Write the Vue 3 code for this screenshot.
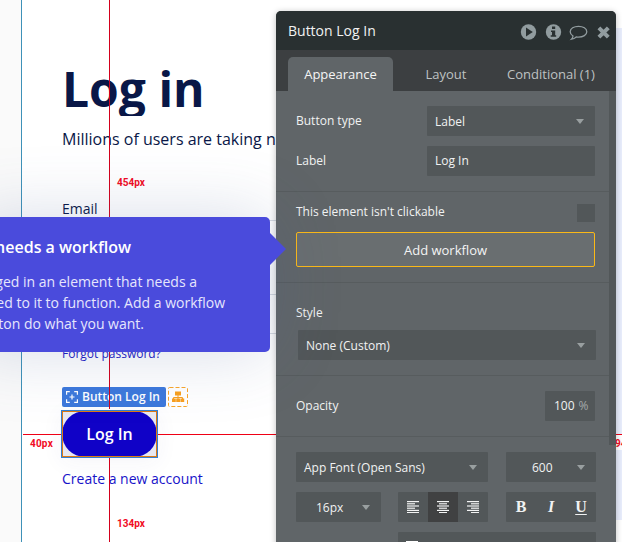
<script setup>
const tabs = [
  { name: 'Appearance', cls: 'active' },
  { name: 'Layout', cls: 'layout' },
  { name: 'Conditional (1)', cls: 'cond' },
]
const aligns = ['left', 'center', 'right']
const lineX = { left: [0, 0, 0, 0, 0, 0], center: [0, 2, 0, 2, 0, 2], right: [0, 4, 0, 4, 0, 4] }
const lineW = { left: [12, 8, 12, 8, 12, 12], center: [12, 8, 12, 8, 12, 8], right: [12, 8, 12, 8, 12, 8] }
</script>

<template>
  <div class="editor">
    <div class="gutter"></div>
    <main class="page">
      <h1><span>Log in</span></h1>
      <p class="sub"><span>Millions of users are taking n</span></p>
      <p class="email"><span>Email</span></p>
      <div class="inputs"><i></i><i></i><i></i></div>
      <p class="forgot"><span>Forgot password?</span></p>
      <div class="tagrow">
        <div class="tag">
          <svg width="12" height="12" viewBox="0 0 12 12" fill="none" stroke="#fff" stroke-width="1.2">
            <path d="M.6 3.8V.6h3.2M8.2.6h3.2v3.2M11.4 8.2v3.2H8.2M3.8 11.4H.6V8.2M6 3.5v5M3.5 6h5" />
          </svg>
          <span>Button Log In</span>
        </div>
        <svg class="wf" width="20" height="20" viewBox="0 0 20 20">
          <rect x=".5" y=".5" width="19" height="19" rx="1" fill="none" stroke="#f9a62b" stroke-dasharray="4 2" />
          <path d="M7 4.500h6v4H7zM4 11.500h3.800v3.500H4zM8.200 11.500H12v3.500H8.200zM12.400 11.500h3.800v3.500h-3.800z" fill="#f9a01f" />
          <path d="M10 8v4M5.500 12.500v-2h9v2" fill="none" stroke="#f9a01f" />
        </svg>
      </div>
      <div class="selected"><div class="pill"><span>Log In</span></div></div>
      <p class="create"><span>Create a new account</span></p>
    </main>
    <div class="strip"></div>

    <div class="guide v top"></div>
    <div class="guide v bottom"></div>
    <div class="guide h left"></div>
    <div class="guide h mid"></div>
    <div class="guide h right"></div>
    <b class="measure m1">454px</b>
    <b class="measure m2">40px</b>
    <b class="measure m3">134px</b>
    <b class="measure m4">94</b>

    <section class="panel">
      <header>
        <span class="title">Button Log In</span>
        <svg width="90" height="20" viewBox="0 0 90 20">
          <circle cx="8.500" cy="10" r="7.700" fill="#919c9f" />
          <path d="M6 5.600v8.800l6.800-4.400z" fill="#293031" />
          <circle cx="33.500" cy="10" r="7.700" fill="#919c9f" />
          <path d="M32 4.500h3.200v2.600H32zM31 8.500h4.200v4.700h1v1.600h-5.500v-1.600H32v-3.100h-1z" fill="#293031" />
          <path d="M58.500 4.300c4.600 0 8.300 2.200 8.300 5.400s-3.700 5.400-8.300 5.400c-.8 0-1.600-.1-2.300-.2-1.400 1.300-3 2-4.700 2.300.9-.9 1.400-1.900 1.500-3.200C51 12.800 50.200 11.400 50.200 9.700c0-3.200 3.700-5.400 8.300-5.400z" fill="none" stroke="#919c9f" stroke-width="1.300" />
          <path d="M78.900 5.800l9.400 9.400M88.300 5.800l-9.400 9.400" stroke="#919c9f" stroke-width="4" />
        </svg>
      </header>
      <nav>
        <div v-for="t in tabs" :key="t.name" :class="t.cls"><span>{{ t.name }}</span></div>
      </nav>
      <div class="body">
        <div class="form">
          <div class="group g1">
            <div class="row"><span class="lb">Button type</span><div class="field f168"><span>Label</span><i class="caret"></i></div></div>
            <div class="row"><span class="lb">Label</span><div class="field f168 input"><span>Log In</span></div></div>
          </div>
          <div class="group g2">
            <div class="row short"><span class="lb">This element isn't clickable</span><div class="check"></div></div>
            <button><span>Add workflow</span></button>
          </div>
          <div class="group g3">
            <span class="style">Style</span>
            <div class="field full"><span>None (Custom)</span><i class="caret"></i></div>
          </div>
          <div class="group g4">
            <div class="row"><span class="lb">Opacity</span><div class="field pct"><span>100</span><em>%</em></div></div>
          </div>
          <div class="group g5">
            <div class="grid">
              <div class="field font"><span>App Font (Open Sans)</span><i class="caret"></i></div>
              <div class="field weight"><span>600</span><i class="caret"></i></div>
            </div>
            <div class="grid">
              <div class="field size"><span>16px</span><i class="caret"></i></div>
              <div class="seg">
                <div v-for="a in aligns" :key="a" :class="{ on: a === 'center' }">
                  <svg width="12" height="12" viewBox="0 0 12 12" fill="#f2f3f3">
                    <rect v-for="n in 6" :key="n" :x="lineX[a][n - 1]" :y="(n - 1) * 2.2" :width="lineW[a][n - 1]" height="1.2" />
                  </svg>
                </div>
              </div>
              <div class="seg serif"><div><b>B</b></div><div><b><i>I</i></b></div><div><b class="u">U</b></div></div>
            </div>
            <div class="grid last"><div class="field color"><i></i></div></div>
          </div>
        </div>
        <div class="track"><div class="thumb"></div></div>
      </div>
    </section>

    <aside class="tip">
      <h2><span>needs a workflow</span></h2>
      <p class="l1"><span>ged in an element that needs a</span></p>
      <p class="l2"><span>ed to it to function. Add a workflow</span></p>
      <p class="l3"><span>ton do what you want.</span></p>
      <svg class="arrow" width="16" height="32" viewBox="0 0 16 32"><path d="M0 0l16 16L0 32z" fill="#4a4bdc" /></svg>
    </aside>
  </div>
</template>

<style>
body { margin: 0; overflow: hidden; }
</style>

<style scoped>
* { box-sizing: border-box; }
.editor { position: relative; display: flex; width: 622px; height: 542px; overflow: hidden; background: #fff; font-family: "Open Sans", "Noto Sans", sans-serif; white-space: nowrap; }
h1, h2, p { margin: 0; }
.gutter { width: 22px; background: #fafafa; border-right: 1px solid #3e91b8; }
.page { width: 594px; padding: 64px 0 0 40px; color: #091747; }
h1 { height: 52px; overflow: hidden; font-size: 48px; line-height: 50px; font-weight: 700; }
.sub { margin-top: 11px; height: 24px; font-size: 16px; line-height: 24px; }
.email { margin-top: 47px; height: 22px; font-size: 14px; line-height: 22px; }
.inputs { display: flex; flex-direction: column; height: 124px; margin-left: -1px; }
.inputs i { height: 1px; background: #d7dbe2; }
.inputs i:nth-child(2) { margin-top: 73px; }
.inputs i:nth-child(3) { margin-top: 38px; }
.forgot { height: 20px; font-size: 12px; line-height: 20px; color: #2119c4; }
.tagrow { display: flex; gap: 2px; margin-top: 23px; height: 20px; }
.tag { display: flex; align-items: center; gap: 4px; width: 104px; padding-left: 4px; border-radius: 2px; background: #3d79dc; color: #fff; font-size: 12px; line-height: 20px; font-weight: 600; }
.tag span { height: 20px; }
.selected { display: flex; width: 97px; height: 48px; margin: 3px 0 0 -1px; border: 1px solid #347fd2; background: #e8e8f0; box-shadow: 0 4px 22px rgba(50, 60, 130, .05); position: relative; }
.selected::after { content: ""; position: absolute; inset: 0; border: 1px solid #dd7a13; }
.pill { display: flex; flex: 1; align-items: center; justify-content: center; border-radius: 23px; background: #1002c7; color: #fff; font-size: 16px; font-weight: 600; }
.create { margin-top: 9px; font-size: 14px; line-height: 24px; color: #1713c9; }
.strip { width: 6px; height: 492px; margin-top: 28px; background: linear-gradient(#e8edfc 407px, #fff 407px, #fff 422px, #e8edfc 422px); }
.guide { position: absolute; background: #ef0015; }
.v { left: 109px; width: 1px; background: #d3001c; }
.top { top: 0; height: 409px; }
.bottom { top: 458px; height: 84px; }
.h { top: 434px; height: 1px; }
.left { left: 23px; width: 38px; }
.mid { left: 158px; width: 118px; }
.right { left: 616px; width: 6px; }
.measure { position: absolute; color: #f10a24; font: 700 10px/12px Roboto, sans-serif; }
.m1 { left: 117px; top: 177px; }
.m2 { left: 30px; top: 438px; letter-spacing: .2px; }
.m3 { left: 117px; top: 518px; }
.m4 { left: 615px; top: 438px; }

.panel { position: absolute; left: 276px; top: 11px; width: 340px; height: 540px; overflow: hidden; border-radius: 5px 5px 0 0; background: #606568; color: #f1f2f2; box-shadow: 0 1px 6px rgba(0, 0, 0, .25); }
header { display: flex; align-items: center; height: 39px; padding-left: 12px; background: #293031; font-size: 14px; }
header svg { margin: 2px 6px 0 auto; width: 90px; }
nav { display: flex; align-items: flex-end; height: 41px; padding-left: 12px; background: #3c3f41; color: #bfc2c3; font-size: 13px; }
nav div { display: flex; align-items: center; justify-content: center; height: 34px; }
nav .active { width: 105px; border-radius: 5px 5px 0 0; background: #606568; color: #f5f5f5; }
nav .layout { width: 106px; }
nav .cond { width: 104px; }
.body { display: flex; height: 460px; font-size: 12px; }
.form { width: 333px; }
.track { width: 7px; }
.thumb { height: 354px; background: #525759; }
.group { padding: 15px 14px 0 20px; border-bottom: 1px solid #575c5e; }
.g1 { display: flex; flex-direction: column; gap: 10px; height: 101px; }
.row { display: flex; justify-content: space-between; align-items: center; height: 30px; }
.lb { padding-bottom: 2px; }
.field { display: flex; align-items: center; justify-content: space-between; height: 30px; padding: 0 10px 0 8px; border-radius: 1px; background: #525759; }
.f168 { width: 168px; }
.input { padding-bottom: 1px; }
.caret { width: 0; border: 4.5px solid transparent; border-top: 5px solid #999fa0; border-bottom: 0; margin: 1px 1px 0 0; }
.g2 { height: 91px; padding-top: 12px; }
.row.short { height: 18px; }
.short .lb { padding-bottom: 3px; }
.check { width: 18px; height: 18px; background: #525759; }
button { display: block; width: 299px; height: 35px; margin-top: 10px; padding: 0; border: 1px solid #fbb917; border-radius: 2px; background: #696e70; color: #f4f4f4; font: 13px "Open Sans", sans-serif; }
.g3 { height: 93px; padding-top: 21px; }
.style { display: block; height: 18px; line-height: 18px; }
.full { width: 298px; margin: 8px 0 0 2px; }
.g4 { height: 61px; }
.pct { width: 50px; justify-content: flex-start; gap: 4px; padding: 0 0 2px 9px; }
.pct em { font-style: normal; color: #a3a8aa; }
.g5 { display: flex; flex-direction: column; gap: 10px; padding-right: 13px; border: 0; }
.grid { display: flex; justify-content: space-between; height: 30px; }
.font { width: 192px; }
.weight { width: 90px; padding-left: 26px; }
.size { width: 85px; padding-left: 20px; }
.seg { display: flex; width: 90px; background: #525759; border-radius: 1px; }
.grid .seg:nth-child(2) { margin-right: 1px; }
.seg > div { display: flex; flex: 1; align-items: center; justify-content: center; }
.seg .on { background: #404142; }
.serif { font: 16px "Liberation Serif", serif; }
.u { text-decoration: underline; text-underline-offset: 2px; text-decoration-thickness: 1px; }
.last { justify-content: flex-end; }
.color { width: 198px; }
.color i { width: 12px; height: 12px; background: #fff; }

.tip { position: absolute; left: -30px; top: 217px; width: 300px; height: 135px; padding: 19px 0 0 30px; border-radius: 5px; background: #4a4bdc; color: #fff; box-shadow: 0 0 70px rgba(75, 95, 150, .22); }
.tip h2, .tip p { display: flex; justify-content: flex-end; }
.tip h2 { width: 131px; height: 22px; font-size: 16px; line-height: 22px; font-weight: 600; }
.tip p { height: 21px; font-size: 14px; line-height: 21px; color: #e6e6fc; }
.tip .l1 { width: 197px; margin-top: 13px; }
.tip .l2 { width: 225px; }
.tip .l3 { width: 144px; }
.arrow { position: absolute; left: 300px; top: 16px; }
</style>
